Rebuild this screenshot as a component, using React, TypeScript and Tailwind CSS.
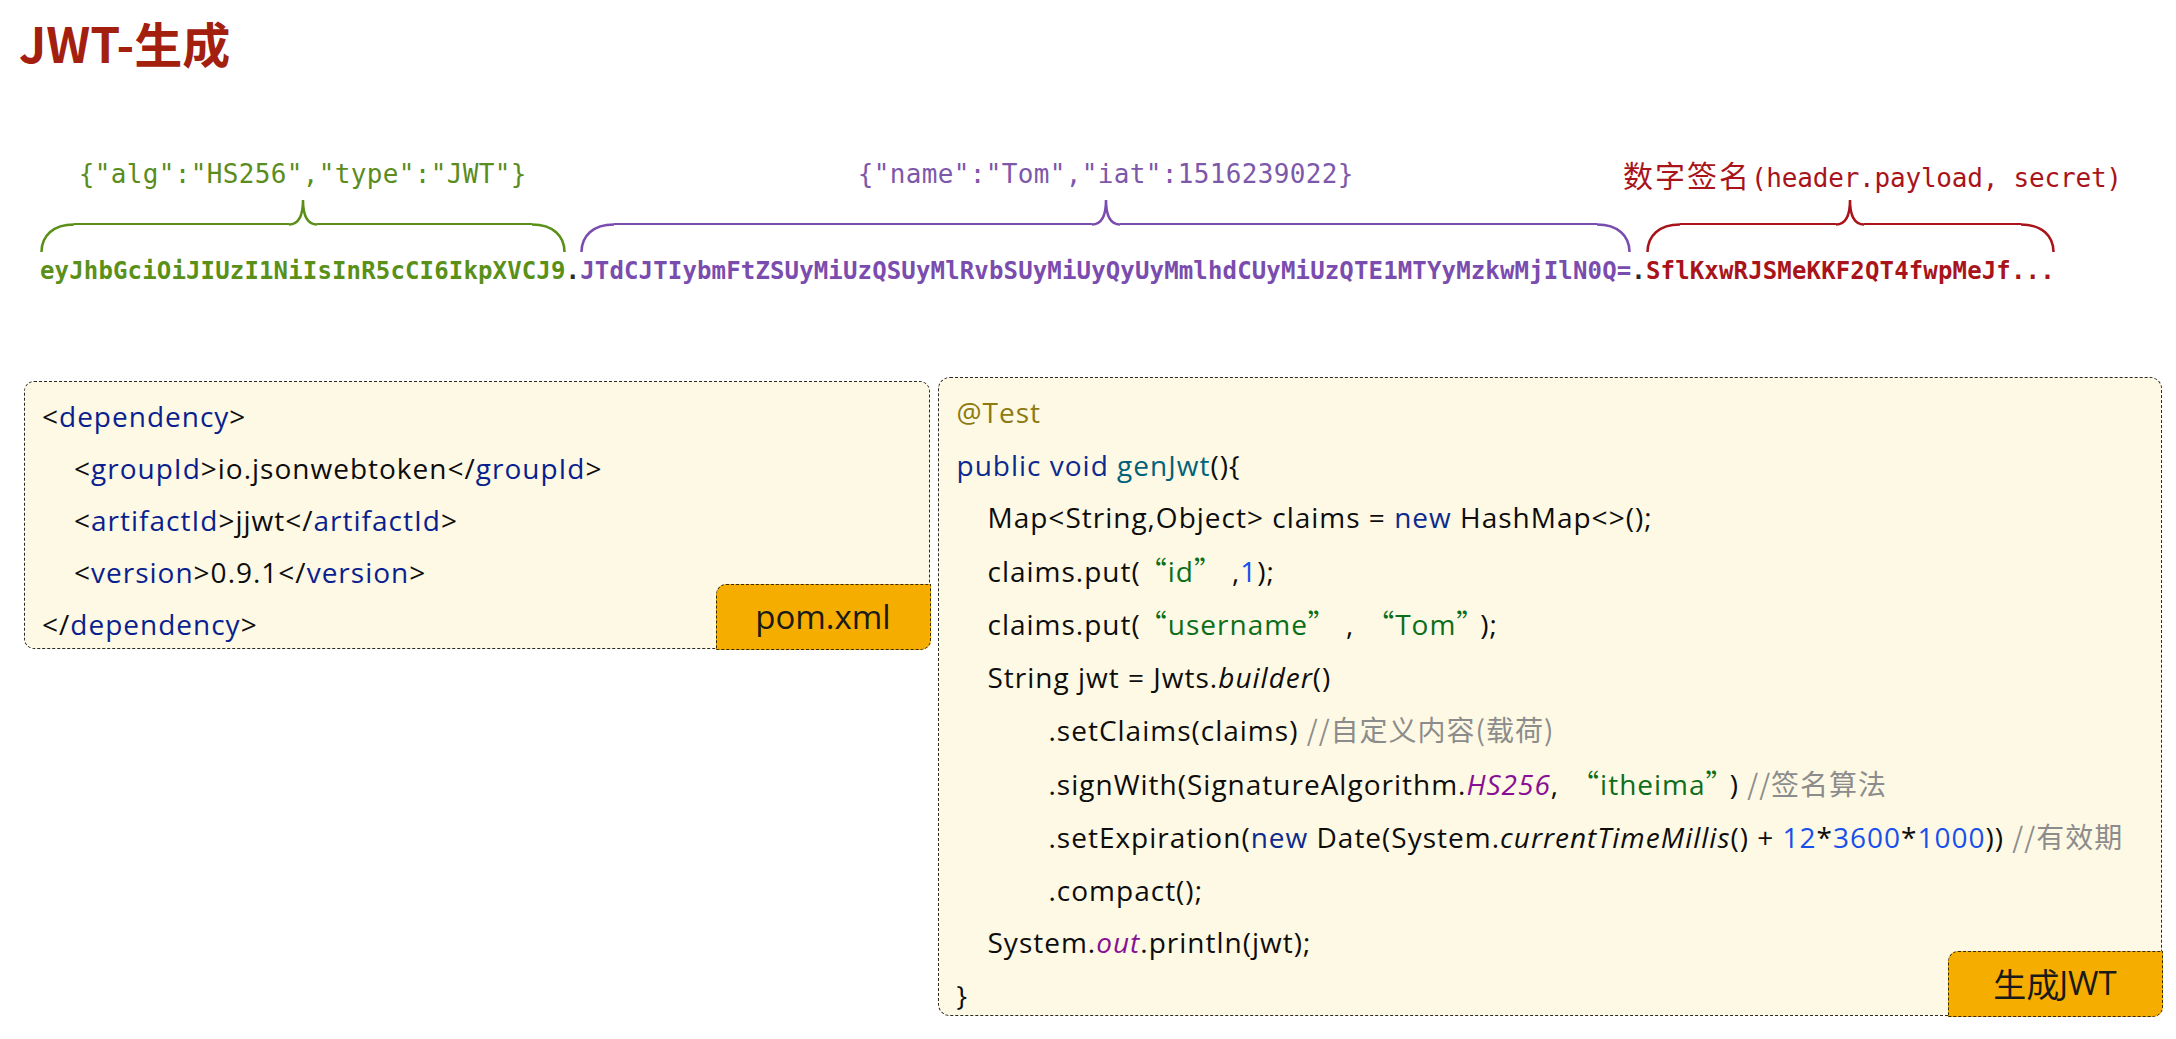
import React from "react";

const mono = "font-['DejaVu_Sans_Mono','Noto_Sans_CJK_SC',monospace]";
const cjk = "font-['Noto_Sans_CJK_SC',sans-serif]";

// curly brace drawn as left curve + line + tip + line + right curve
const Brace = ({ color }: { color: string }) => (
  <div className="flex items-start h-[54px] w-full">
    <svg width="34" height="54" className="shrink-0">
      <path d="M1.5 54 C1.5 38 13 26.5 34 26.5" fill="none" stroke={color} strokeWidth="2.5" />
    </svg>
    <div className="flex-1 mt-[25.25px] border-t-[2.5px]" style={{ borderColor: color }} />
    <svg width="28" height="54" className="shrink-0">
      <path d="M0 26.5 C8 26.5 14 21 14 2 C14 21 20 26.5 28 26.5" fill="none" stroke={color} strokeWidth="2.5" />
    </svg>
    <div className="flex-1 mt-[25.25px] border-t-[2.5px]" style={{ borderColor: color }} />
    <svg width="34" height="54" className="shrink-0">
      <path d="M0 26.5 C21 26.5 32.5 38 32.5 54" fill="none" stroke={color} strokeWidth="2.5" />
    </svg>
  </div>
);

const Segment = ({
  label,
  token,
  color,
  labelColor,
  shift = "",
}: {
  label: React.ReactNode;
  token: string;
  color: string;
  labelColor: string;
  shift?: string;
}) => (
  <div className="flex flex-col">
    <div className="flex justify-center h-[30px]">
      <div className={`w-0 flex justify-center ${shift}`}>
        <span
          className={`whitespace-nowrap text-[26px] leading-[30px] tracking-[0.35px] ${mono}`}
          style={{ color: labelColor }}
        >
          {label}
        </span>
      </div>
    </div>
    <div className="mt-[9px]">
      <Brace color={color} />
    </div>
    <div
      className={`mt-[5px] whitespace-nowrap text-[24px] leading-[28px] font-bold tracking-[0.15px] ${mono}`}
      style={{ color }}
    >
      {token}
    </div>
  </div>
);

const Dot = () => (
  <div className={`text-[24px] leading-[28px] font-bold tracking-[0.15px] text-[#2a2a2a] ${mono}`}>.</div>
);

const Badge = ({ children }: { children: React.ReactNode }) => (
  <div className="absolute right-[-1.5px] bottom-[-1.5px] w-[215px] h-[66px] bg-[#f5ad00] border-[1.5px] border-dashed border-[#3a2a00] rounded-tl-[10px] rounded-br-[10px] flex items-center justify-center text-[33px] tracking-normal text-[#1a1a1a] font-['Open_Sans','Noto_Sans_CJK_SC',sans-serif]">
    {children}
  </div>
);

const Tag = ({ children }: { children: React.ReactNode }) => (
  <span className="text-[#0a1f8f]">{children}</span>
);
const Kw = ({ children }: { children: React.ReactNode }) => (
  <span className="text-[#0d2a8e]">{children}</span>
);
const Str = ({ children }: { children: React.ReactNode }) => (
  <span className="text-[#0b6e1a]">
    <span className={`ml-[12px] ${cjk}`}>“</span>
    {children}
    <span className={`mr-[9px] ${cjk}`}>”</span>
  </span>
);
const Num = ({ children }: { children: React.ReactNode }) => (
  <span className="text-[#1750eb]">{children}</span>
);
const Cmt = ({ children }: { children: React.ReactNode }) => (
  <span className={`text-[#8c8c8c] ${cjk}`}>{children}</span>
);
const Static = ({ children }: { children: React.ReactNode }) => (
  <span className="italic text-[#871094]">{children}</span>
);

export default function App() {
  return (
    <div className="w-[2176px] h-[1039px] bg-white overflow-hidden">
      <h1 className={`pt-[18px] pl-[19px] text-[48px] leading-[48px] font-bold text-[#a3200f] ${cjk}`}>
        JWT-生成
      </h1>

      {/* header . payload . signature */}
      <div className="mt-[93px] ml-[40px] flex items-end">
        <Segment
          label={'{"alg":"HS256","type":"JWT"}'}
          token="eyJhbGciOiJIUzI1NiIsInR5cCI6IkpXVCJ9"
          color="#5a9018"
          labelColor="#5b8c1e"
        />
        <Dot />
        <Segment
          label={'{"name":"Tom","iat":1516239022}'}
          token="JTdCJTIybmFtZSUyMiUzQSUyMlRvbSUyMiUyQyUyMmlhdCUyMiUzQTE1MTYyMzkwMjIlN0Q="
          color="#7a4cae"
          labelColor="#7d58aa"
        />
        <Dot />
        <Segment
          label={
            <>
              <span className={`text-[30px] tracking-[2px] ${cjk}`}>数字签名</span>
              <span className="tracking-[-0.2px]">(header.payload, secret)</span>
            </>
          }
          token="SflKxwRJSMeKKF2QT4fwpMeJf..."
          color="#a8141a"
          labelColor="#a8141a"
          shift="ml-[44px]"
        />
      </div>

      <div className="mt-[92px] pl-[24px] flex items-start gap-[8px] font-['Open_Sans','Noto_Sans_CJK_SC',sans-serif] text-[28px] tracking-[1px] text-[#0d0d0d]">
        {/* pom.xml */}
        <div className="relative mt-[4px] w-[906px] h-[268px] rounded-[10px] border-[1.5px] border-dashed border-[#2a2a2a] bg-[#fef9e4] pt-[8px] pl-[17px] leading-[52px]">
          <div>
            &lt;<Tag>dependency</Tag>&gt;
          </div>
          <div className="pl-[32px]">
            &lt;<Tag>groupId</Tag>&gt;io.jsonwebtoken&lt;/<Tag>groupId</Tag>&gt;
          </div>
          <div className="pl-[32px]">
            &lt;<Tag>artifactId</Tag>&gt;jjwt&lt;/<Tag>artifactId</Tag>&gt;
          </div>
          <div className="pl-[32px]">
            &lt;<Tag>version</Tag>&gt;0.9.1&lt;/<Tag>version</Tag>&gt;
          </div>
          <div>
            &lt;/<Tag>dependency</Tag>&gt;
          </div>
          <Badge>pom.xml</Badge>
        </div>

        {/* test code */}
        <div className="relative w-[1224px] h-[639px] rounded-[12px] border-[1.5px] border-dashed border-[#2a2a2a] bg-[#fef9e4] pt-[8px] pl-[17.5px] leading-[52.5px]">
          <div className="text-[#8c7a12]">@Test</div>
          <div>
            <Kw>public void</Kw> <span className="text-[#00627a]">genJwt</span>(){"{"}
          </div>
          <div className="pl-[31px]">
            Map&lt;String,Object&gt; claims = <Kw>new</Kw> HashMap&lt;&gt;();
          </div>
          <div className="pl-[31px]">
            claims.put(<Str>id</Str>,<Num>1</Num>);
          </div>
          <div className="pl-[31px]">
            claims.put(<Str>username</Str>,<Str>Tom</Str>);
          </div>
          <div className="pl-[31px]">
            String jwt = Jwts.<span className="italic">builder</span>()
          </div>
          <div className="pl-[92px]">
            .setClaims(claims) <Cmt>//自定义内容(载荷)</Cmt>
          </div>
          <div className="pl-[92px]">
            .signWith(SignatureAlgorithm.<Static>HS256</Static>,<Str>itheima</Str>) <Cmt>//签名算法</Cmt>
          </div>
          <div className="pl-[92px]">
            .setExpiration(<Kw>new</Kw> Date(System.<span className="italic">currentTimeMillis</span>() +{" "}
            <Num>12</Num>*<Num>3600</Num>*<Num>1000</Num>)) <Cmt>//有效期</Cmt>
          </div>
          <div className="pl-[92px]">.compact();</div>
          <div className="pl-[31px]">
            System.<Static>out</Static>.println(jwt);
          </div>
          <div>{"}"}</div>
          <Badge>
            <span className={cjk}>生成</span>JWT
          </Badge>
        </div>
      </div>
    </div>
  );
}
